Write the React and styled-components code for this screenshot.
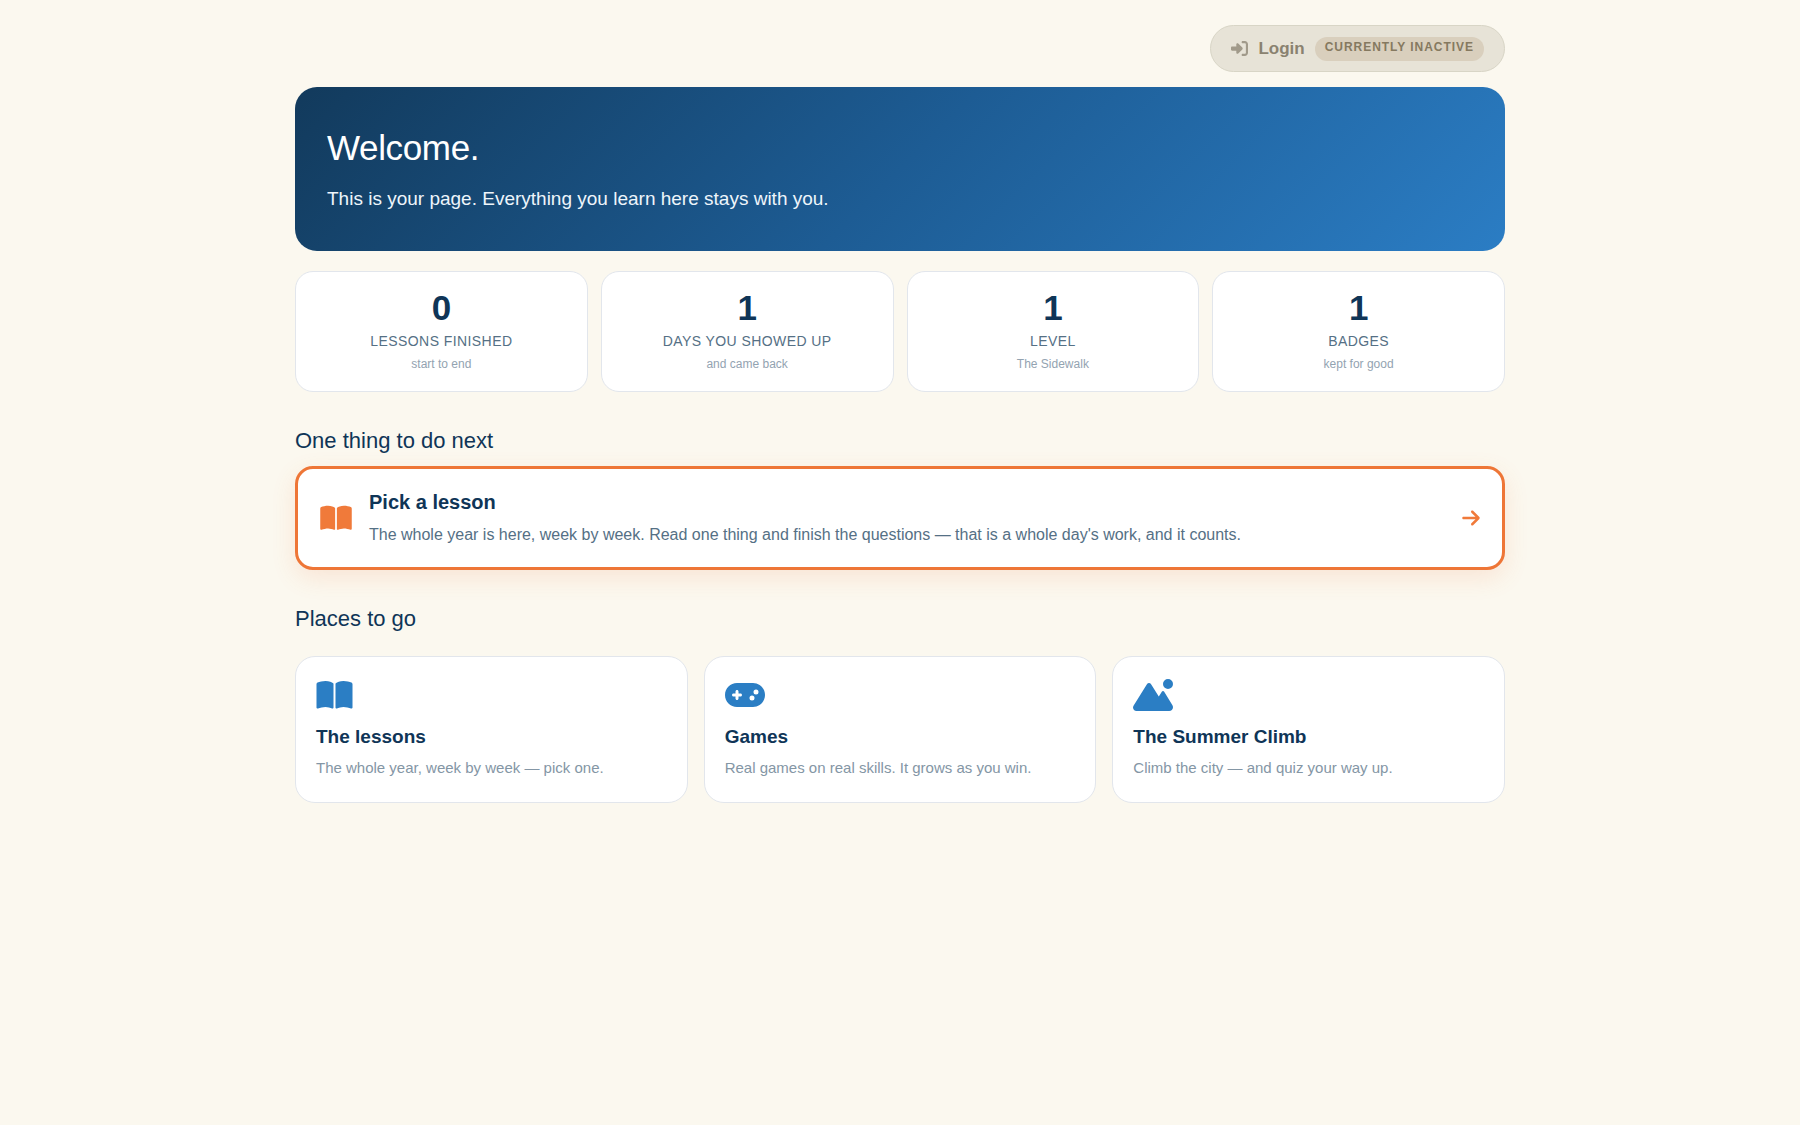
import React from "react";
import styled, { createGlobalStyle } from "styled-components";
import {
  FaArrowRight,
  FaBookOpen,
  FaGamepad,
  FaMountainSun,
  FaRightToBracket,
} from "react-icons/fa6";

const GlobalStyle = createGlobalStyle`
  *, *::before, *::after { box-sizing: border-box; }
  body {
    margin: 0;
    background: #fbf8ef;
    color: #0f3557;
    font-family: "Liberation Sans", Arial, sans-serif;
    font-size: 16px;
    line-height: 1.6;
  }
  h1, h2, h3, p { margin: 0; }
`;

const Page = styled.main`
  max-width: 1250px;
  margin: 0 auto;
  padding: 25px 20px 64px;
`;

const TopBar = styled.header`
  display: flex;
  justify-content: flex-end;
  margin-bottom: 15px;
`;

const LoginButton = styled.button`
  display: inline-flex;
  align-items: center;
  gap: 10px;
  height: 47px;
  padding: 0 20px;
  border: 1px solid #d8d5c6;
  border-radius: 999px;
  background: #e7e3d7;
  color: #8a8270;
  font: inherit;
  font-size: 17px;
  font-weight: 700;
  cursor: not-allowed;

  svg { color: #a19a8a; }
`;

const StatusPill = styled.span`
  padding: 1px 10px 5px;
  border-radius: 999px;
  background: #d9cfbd;
  color: #857960;
  font-size: 12px;
  line-height: 18px;
  letter-spacing: 0.08em;
  text-transform: uppercase;
`;

const Hero = styled.section`
  padding: 37px 32px;
  border-radius: 22px;
  background: linear-gradient(135deg, #123a5c 0%, #1d5c94 50%, #2b7dc4 100%);
  color: #fff;
`;

const HeroTitle = styled.h1`
  margin-bottom: 12px;
  font-size: 35px;
  font-weight: 400;
  line-height: 48px;
  letter-spacing: -0.01em;
`;

const HeroText = styled.p`
  color: #eef5fb;
  font-size: 19px;
  line-height: 30px;
`;

const Stats = styled.section`
  display: grid;
  grid-template-columns: repeat(4, 1fr);
  gap: 13px;
  margin-top: 20px;
`;

const Stat = styled.div`
  padding: 18px 16px 16px;
  border: 1px solid #e2e6ec;
  border-radius: 18px;
  background: #fff;
  text-align: center;
`;

const StatValue = styled.div`
  font-size: 35px;
  font-weight: 700;
  line-height: 36px;
`;

const StatLabel = styled.div`
  margin-top: 4px;
  color: #557085;
  font-size: 14px;
  line-height: 22px;
  letter-spacing: 0.03em;
  text-transform: uppercase;
`;

const StatNote = styled.div`
  margin-top: 2px;
  color: #93a3b1;
  font-size: 12px;
  line-height: 21px;
`;

const SectionTitle = styled.h2`
  margin-top: 32px;
  font-size: 22px;
  font-weight: 400;
  line-height: 34px;
`;

const NextCard = styled.a`
  display: flex;
  align-items: center;
  gap: 17px;
  margin-top: 8px;
  padding: 17px 22px;
  border: 3px solid #ee7637;
  border-radius: 18px;
  background: #fff;
  box-shadow: 0 8px 24px rgba(240, 110, 60, 0.14);
  color: inherit;
  text-decoration: none;
`;

const IconBox = styled.span`
  display: block;
  flex: none;
  color: ${({ $color }) => $color};

  svg {
    display: block;
    width: ${({ $width }) => $width}px;
    height: ${({ $height }) => $height}px;
  }
`;

const NextBody = styled.div`
  flex: 1;
  padding-bottom: 2px;
`;

const CardTitle = styled.h3`
  font-size: ${({ $large }) => ($large ? 20 : 19)}px;
  font-weight: 700;
  line-height: 32px;
`;

const NextText = styled.p`
  margin-top: 4px;
  color: #557085;
  font-size: 16px;
  line-height: 26px;
`;

const Places = styled.nav`
  display: grid;
  grid-template-columns: repeat(3, 1fr);
  gap: 16px;
  margin-top: 20px;
`;

const Place = styled.a`
  display: flex;
  flex-direction: column;
  align-items: flex-start;
  padding: 22px 20px;
  border: 1px solid #e2e6ec;
  border-radius: 20px;
  background: #fff;
  color: inherit;
  text-decoration: none;

  ${IconBox} { margin-bottom: 10px; }
`;

const PlaceText = styled.p`
  margin-top: 3px;
  color: #8496a5;
  font-size: 15px;
  line-height: 24px;
`;

const ORANGE = "#f07a3a";
const BLUE = "#2b7ec4";

const stats = [
  { value: 0, label: "Lessons finished", note: "start to end" },
  { value: 1, label: "Days you showed up", note: "and came back" },
  { value: 1, label: "Level", note: "The Sidewalk" },
  { value: 1, label: "Badges", note: "kept for good" },
];

const places = [
  {
    icon: FaBookOpen,
    iconWidth: 37,
    title: "The lessons",
    text: "The whole year, week by week — pick one.",
  },
  {
    icon: FaGamepad,
    iconWidth: 40,
    title: "Games",
    text: "Real games on real skills. It grows as you win.",
  },
  {
    icon: FaMountainSun,
    iconWidth: 40,
    title: "The Summer Climb",
    text: "Climb the city — and quiz your way up.",
  },
];

export default function App() {
  return (
    <>
      <GlobalStyle />
      <Page>
        <TopBar>
          <LoginButton type="button" aria-disabled="true">
            <FaRightToBracket aria-hidden="true" />
            Login
            <StatusPill>Currently inactive</StatusPill>
          </LoginButton>
        </TopBar>

        <Hero>
          <HeroTitle>Welcome.</HeroTitle>
          <HeroText>This is your page. Everything you learn here stays with you.</HeroText>
        </Hero>

        <Stats>
          {stats.map((stat) => (
            <Stat key={stat.label}>
              <StatValue>{stat.value}</StatValue>
              <StatLabel>{stat.label}</StatLabel>
              <StatNote>{stat.note}</StatNote>
            </Stat>
          ))}
        </Stats>

        <SectionTitle>One thing to do next</SectionTitle>
        <NextCard href="#lessons">
          <IconBox $width={32} $height={28} $color={ORANGE}>
            <FaBookOpen aria-hidden="true" />
          </IconBox>
          <NextBody>
            <CardTitle $large>Pick a lesson</CardTitle>
            <NextText>
              The whole year is here, week by week. Read one thing and finish the questions — that
              is a whole day's work, and it counts.
            </NextText>
          </NextBody>
          <IconBox $width={18} $height={20} $color={ORANGE}>
            <FaArrowRight aria-hidden="true" />
          </IconBox>
        </NextCard>

        <SectionTitle>Places to go</SectionTitle>
        <Places>
          {places.map(({ icon: Icon, iconWidth, title, text }) => (
            <Place key={title} href="#places">
              <IconBox $width={iconWidth} $height={32} $color={BLUE}>
                <Icon aria-hidden="true" />
              </IconBox>
              <CardTitle>{title}</CardTitle>
              <PlaceText>{text}</PlaceText>
            </Place>
          ))}
        </Places>
      </Page>
    </>
  );
}
